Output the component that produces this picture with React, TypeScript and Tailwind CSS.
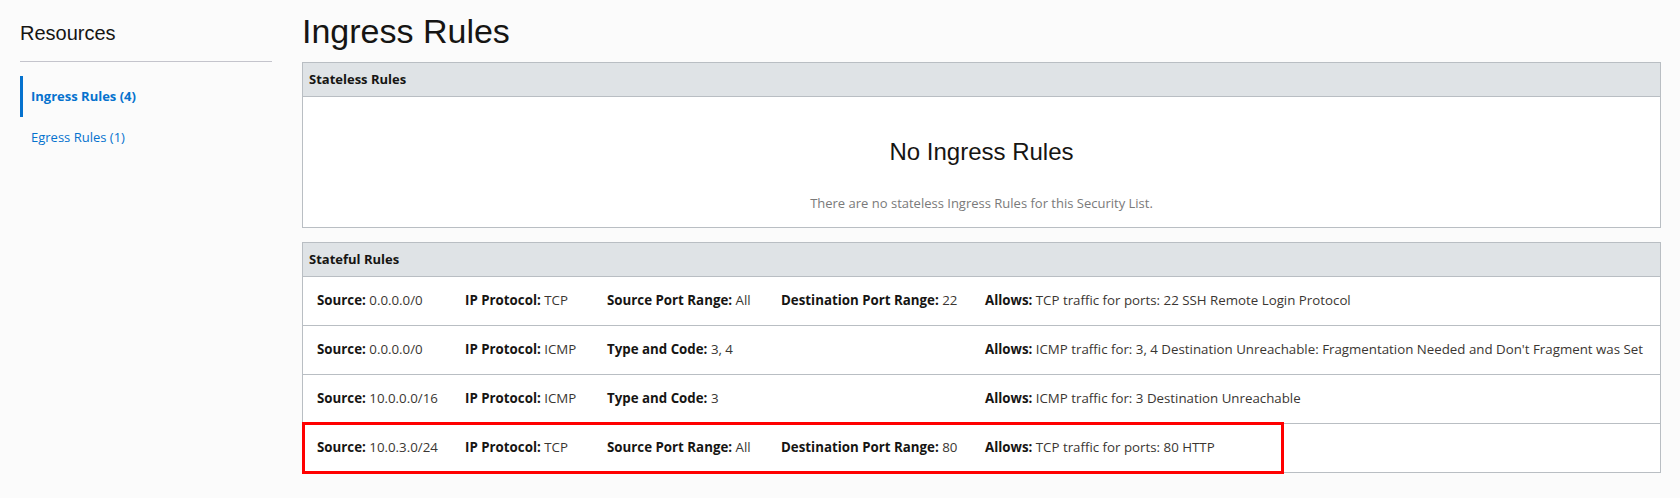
import React from 'react';

const ui = "font-['Open_Sans','Noto_Sans',sans-serif]";

type Field = { label: string; value: string } | null;

const rules: { cells: Field[]; allows: string; marked?: boolean }[] = [
  {
    cells: [
      { label: 'Source:', value: '0.0.0.0/0' },
      { label: 'IP Protocol:', value: 'TCP' },
      { label: 'Source Port Range:', value: 'All' },
      { label: 'Destination Port Range:', value: '22' },
    ],
    allows: 'TCP traffic for ports: 22 SSH Remote Login Protocol',
  },
  {
    cells: [
      { label: 'Source:', value: '0.0.0.0/0' },
      { label: 'IP Protocol:', value: 'ICMP' },
      { label: 'Type and Code:', value: '3, 4' },
      null,
    ],
    allows: "ICMP traffic for: 3, 4 Destination Unreachable: Fragmentation Needed and Don't Fragment was Set",
  },
  {
    cells: [
      { label: 'Source:', value: '10.0.0.0/16' },
      { label: 'IP Protocol:', value: 'ICMP' },
      { label: 'Type and Code:', value: '3' },
      null,
    ],
    allows: 'ICMP traffic for: 3 Destination Unreachable',
  },
  {
    cells: [
      { label: 'Source:', value: '10.0.3.0/24' },
      { label: 'IP Protocol:', value: 'TCP' },
      { label: 'Source Port Range:', value: 'All' },
      { label: 'Destination Port Range:', value: '80' },
    ],
    allows: 'TCP traffic for ports: 80 HTTP',
    marked: true,
  },
];

function Item({ f }: { f: Field }) {
  if (!f) return <div />;
  return (
    <div className="whitespace-nowrap">
      <span className="font-bold text-[#161513]">{f.label}</span>{' '}
      <span className="text-[#3a3632]">{f.value}</span>
    </div>
  );
}

export default function App() {
  return (
    <div className={`min-h-[498px] bg-[#fbfbfb] flex ${ui}`}>
      {/* Sidebar */}
      <aside className="w-[272px] shrink-0 pl-[20px] pt-[21px]">
        <h2 className="font-['Liberation_Sans',Arial,sans-serif] text-[20px] leading-[24px] text-[#161513]">Resources</h2>
        <div className="mt-[16px] h-px bg-[#c4c4cc]" />
        <nav className="mt-[14px] flex flex-col">
          <a className="h-[41px] flex items-center border-l-[3px] border-[#0572ce] pl-[8px] text-[13px] font-bold text-[#0572ce]">
            Ingress Rules (4)
          </a>
          <a className="h-[41px] flex items-center pl-[11px] text-[13px] text-[#0572ce]">Egress Rules (1)</a>
        </nav>
      </aside>

      {/* Main */}
      <main className="flex-1 ml-[30px] mr-[19px] pt-[11px]">
        <h1 className="font-['Liberation_Sans',Arial,sans-serif] text-[34px] leading-[40px] text-[#161513] mb-[11px]">
          Ingress Rules
        </h1>

        <section className="border border-[#b9bec3] bg-white">
          <div className="h-[34px] flex items-center px-[6px] bg-[#dfe3e6] border-b border-[#b9bec3] text-[13px] font-bold text-[#161513]">
            Stateless Rules
          </div>
          <div className="flex flex-col items-center pt-[40px] pb-[15px]">
            <div className="font-['Liberation_Sans',Arial,sans-serif] text-[24px] leading-[30px] text-[#161513]">No Ingress Rules</div>
            <div className="mt-[27px] text-[13px] leading-[18px] text-[#7a7a7a]">
              There are no stateless Ingress Rules for this Security List.
            </div>
          </div>
        </section>

        <section className="mt-[14px] border border-[#b9bec3] bg-white">
          <div className="h-[34px] flex items-center px-[6px] bg-[#dfe3e6] border-b border-[#b9bec3] text-[13px] font-bold text-[#161513]">
            Stateful Rules
          </div>
          {rules.map((r, i) => (
            <div
              key={i}
              className={`relative grid grid-cols-[148px_142px_174px_204px_1fr] items-center pl-[14px] text-[13.3px] ${
                i < rules.length - 1 ? 'border-b border-[#b9bec3] h-[49px]' : 'h-[48px]'
              }`}
            >
              {r.cells.map((c, j) => (
                <Item key={j} f={c} />
              ))}
              <Item f={{ label: 'Allows:', value: r.allows }} />
              {r.marked && (
                <div className="absolute left-[-1px] top-[-2px] bottom-[-2px] w-[982px] border-[3px] border-[#ff0000] pointer-events-none" />
              )}
            </div>
          ))}
        </section>
      </main>
    </div>
  );
}
